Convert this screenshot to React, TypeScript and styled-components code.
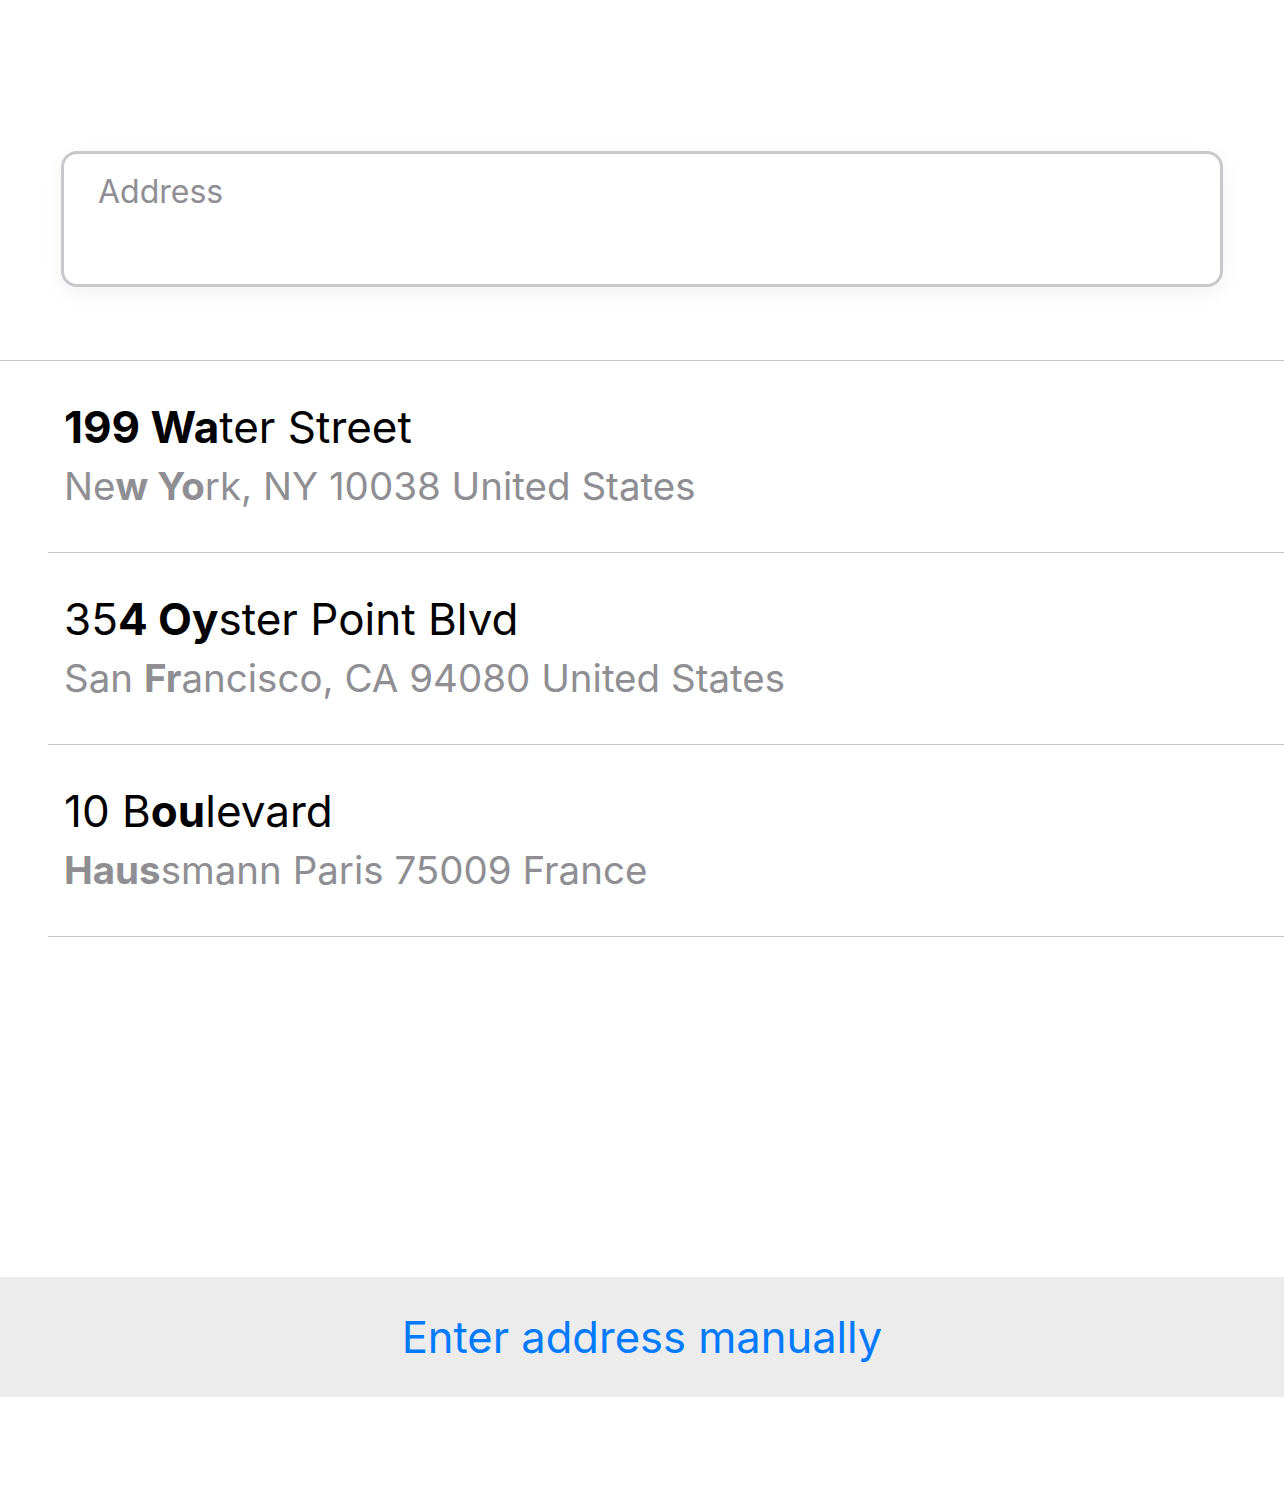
import React from "react";
import styled, { createGlobalStyle } from "styled-components";

const GlobalStyle = createGlobalStyle`
  body {
    margin: 0;
    background: #ffffff;
    font-family: Inter, "Noto Sans", sans-serif;
    -webkit-font-smoothing: antialiased;
  }
`;

const Page = styled.div`
  display: flex;
  flex-direction: column;
  width: 100%;
  min-height: 1500px;
  background: #ffffff;
`;

const SearchArea = styled.div`
  padding: 151px 61px 73px 61px;
`;

const AddressField = styled.div`
  box-sizing: border-box;
  height: 136px;
  border: 3px solid #c8c7cc;
  border-radius: 16px;
  background: #ffffff;
  box-shadow: 0 6px 20px rgba(0, 0, 0, 0.06);
  padding: 17px 34px;
`;

const Placeholder = styled.span`
  font-size: 32px;
  line-height: 42px;
  color: #8e8e93;
`;

const List = styled.div`
  border-top: 1px solid #c8c7cc;
`;

const Row = styled.div`
  box-sizing: border-box;
  height: 192px;
  margin-left: 48px;
  padding-left: 16px;
  border-bottom: 1px solid #c8c7cc;
  display: flex;
  flex-direction: column;
  justify-content: center;
`;

const Title = styled.div`
  font-size: 44px;
  line-height: 59px;
  color: #000000;
  white-space: nowrap;
`;

const Subtitle = styled.div`
  font-size: 38.5px;
  line-height: 59px;
  color: #8e8e93;
  white-space: nowrap;
`;

const Match = styled.b`
  font-weight: 650;
`;

const Spacer = styled.div`
  height: 340px;
`;

const ManualButton = styled.button`
  height: 120px;
  border: none;
  background: #ececec;
  color: #007aff;
  font-family: inherit;
  font-size: 43.5px;
  cursor: pointer;
`;

type Part = [string, boolean];

const results: { title: Part[]; subtitle: Part[] }[] = [
  {
    title: [["199 Wa", true], ["ter Street", false]],
    subtitle: [["Ne", false], ["w Yo", true], ["rk, NY 10038 United States", false]],
  },
  {
    title: [["35", false], ["4 Oy", true], ["ster Point Blvd", false]],
    subtitle: [["San ", false], ["Fr", true], ["ancisco, CA 94080 United States", false]],
  },
  {
    title: [["10 B", false], ["ou", true], ["levard", false]],
    subtitle: [["Haus", true], ["smann Paris 75009 France", false]],
  },
];

const renderParts = (parts: Part[]) =>
  parts.map(([text, bold], i) => (bold ? <Match key={i}>{text}</Match> : <React.Fragment key={i}>{text}</React.Fragment>));

const App = () => {
  return (
    <Page>
      <GlobalStyle />
      <SearchArea>
        <AddressField>
          <Placeholder>Address</Placeholder>
        </AddressField>
      </SearchArea>
      <List>
        {results.map((r, i) => (
          <Row key={i}>
            <Title>{renderParts(r.title)}</Title>
            <Subtitle>{renderParts(r.subtitle)}</Subtitle>
          </Row>
        ))}
      </List>
      <Spacer />
      <ManualButton>Enter address manually</ManualButton>
    </Page>
  );
};

export default App;
